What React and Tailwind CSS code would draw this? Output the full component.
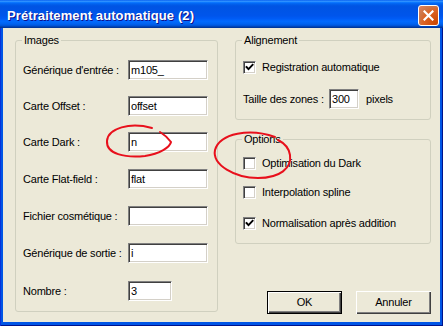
import React from "react";

const sunken =
  "bg-white border-t border-l border-t-[#808080] border-l-[#808080] border-b border-r border-b-white border-r-white shadow-[inset_1px_1px_0_#404040,inset_-1px_-1px_0_#d4d0c8]";

function Field({ label, value, w = "w-[80px]", cls = "" }) {
  return (
    <div className={"flex items-center h-[20px] " + cls}>
      <span className="w-[105px] whitespace-nowrap">{label}</span>
      <div className={sunken + " h-[20px] flex items-center pl-[2px] " + w}>
        <span>{value}</span>
      </div>
    </div>
  );
}

function Check({ checked, label, cls = "" }) {
  return (
    <div className={"flex items-center h-[13px] gap-[6px] " + cls}>
      <div className={sunken + " w-[13px] h-[13px] flex items-center justify-center"}>
        {checked && (
          <svg width="9" height="9" viewBox="0 0 9 9" className="block">
            <path d="M1.5 4 L3.5 6.2 L7.6 1.8" fill="none" stroke="#000" strokeWidth="1.9" strokeLinecap="square" />
          </svg>
        )}
      </div>
      <span className="whitespace-nowrap">{label}</span>
    </div>
  );
}

function Group({ title, cls = "", children }) {
  return (
    <div className={"relative border border-[#D0D0BF] rounded-[3px] " + cls}>
      <span className="absolute -top-[7px] left-[6px] px-[2px] bg-[#ECE9D8] leading-[13px]">{title}</span>
      {children}
    </div>
  );
}

export default function App() {
  return (
    <div className="relative w-[443px] h-[326px] flex flex-col bg-[#0055E5] overflow-hidden font-['Liberation_Sans',Arial,sans-serif] shadow-[inset_1px_0_0_#0831d9,inset_-1px_0_0_#00138c,inset_0_-1px_0_#00138c]">
      <div className="h-[28px] flex items-start pl-[7px] pr-[4px] bg-[linear-gradient(to_bottom,#0058ee_0%,#3593ff_4%,#288eff_6%,#127dff_8%,#036ffc_10%,#0262ee_14%,#0057e5_20%,#0054e3_24%,#0055eb_56%,#005bf5_66%,#026afe_76%,#0062ef_86%,#0052d6_92%,#0040ab_96%,#003092_100%)]">
        <span className="mt-[8px] leading-[16px] text-[13px] font-bold text-white tracking-[0.1px] [text-shadow:1px_1px_0_#0f1089] whitespace-nowrap">
          Prétraitement automatique (2)
        </span>
        <div className="ml-auto mt-[5px] w-[21px] h-[21px] rounded-[3px] border border-white bg-[radial-gradient(circle_at_90%_90%,#cc4600_0%,#dc6527_55%,#cd7546_70%,#e3825e_100%)] flex items-center justify-center">
          <svg width="11" height="11" viewBox="0 0 11 11" className="block">
            <path d="M1.5 1.5 L9.5 9.5 M9.5 1.5 L1.5 9.5" stroke="#fff" strokeWidth="2.2" strokeLinecap="square" />
          </svg>
        </div>
      </div>
      <div className="flex-1 mx-[3px] mb-[4px] bg-[#ECE9D8] flex pt-[12px] pl-[12px] text-[11px] leading-[13px] tracking-[-0.2px] text-black">
        <Group title="Images" cls="w-[203px] h-[272px] pl-[7px] pt-[19px] flex flex-col">
          <Field label="Générique d'entrée :" value="m105_" />
          <Field label="Carte Offset :" value="offset" cls="mt-[16px]" />
          <Field label="Carte Dark :" value="n" cls="mt-[16px]" />
          <Field label="Carte Flat-field :" value="flat" cls="mt-[17px]" />
          <Field label="Fichier cosmétique :" value="" cls="mt-[17px]" />
          <Field label="Générique de sortie :" value="i" cls="mt-[17px]" />
          <Field label="Nombre :" value="3" w="w-[44px]" cls="mt-[18px]" />
        </Group>
        <div className="ml-[17px] w-[196px] flex flex-col">
          <Group title="Alignement" cls="h-[80px] pl-[7px] pt-[20px] flex flex-col">
            <Check checked label="Registration automatique" />
            <div className="mt-[15px] flex items-center h-[20px]">
              <span className="w-[86px] whitespace-nowrap">Taille des zones :</span>
              <div className={sunken + " w-[30px] h-[20px] flex items-center pl-[2px]"}>300</div>
              <span className="ml-[7px]">pixels</span>
            </div>
          </Group>
          <Group title="Options" cls="mt-[19px] h-[105px] pl-[7px] pt-[17px] flex flex-col">
            <Check label="Optimisation du Dark" />
            <Check label="Interpolation spline" cls="mt-[16px]" />
            <Check checked label="Normalisation après addition" cls="mt-[18px]" />
          </Group>
          <div className="mt-[47px] flex justify-end gap-[14px]">
            <div className="w-[75px] h-[23px] border border-black bg-[#ECE9D8] shadow-[inset_1px_1px_0_#fff,inset_-1px_-1px_0_#404040,inset_-2px_-2px_0_#808080] flex items-center justify-center">
              OK
            </div>
            <div className="w-[75px] h-[23px] bg-[#ECE9D8] shadow-[inset_1px_1px_0_#fff,inset_-1px_-1px_0_#404040,inset_-2px_-2px_0_#808080] flex items-center justify-center">
              Annuler
            </div>
          </div>
        </div>
      </div>
      <svg className="absolute inset-0 pointer-events-none" width="443" height="326" viewBox="0 0 443 326">
        <path d="M152 128 C130 122, 108 128, 107 141 C106 154, 125 158, 145 156 C160 154, 170 147, 171 142 C168 138, 165 135, 160 132" fill="none" stroke="#E8101C" strokeWidth="2" strokeLinecap="round" />
        <path d="M275 137 C250 128, 220 133, 215 150 C212 165, 235 178, 258 178 C280 178, 292 168, 290 155 C289 148, 284 143, 278 140" fill="none" stroke="#E8101C" strokeWidth="2" strokeLinecap="round" />
      </svg>
    </div>
  );
}
